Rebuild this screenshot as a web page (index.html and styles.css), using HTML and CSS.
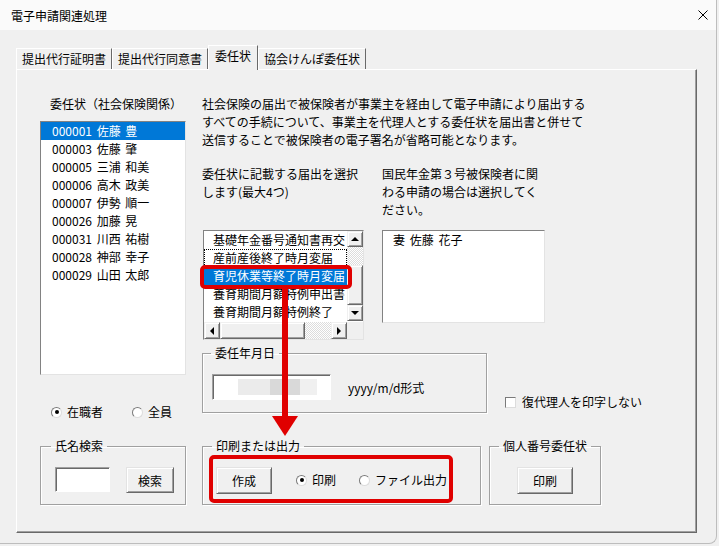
FILE: index.html
```html
<!DOCTYPE html>
<html lang="ja">
<head>
  <meta charset="UTF-8" />
  <title>電子申請関連処理</title>
  <link rel="stylesheet" href="styles.css">
</head>
<body>
  <div class="window">
    <div class="titlebar">
      <span>電子申請関連処理</span>
      <svg class="close" width="10" height="10" viewBox="0 0 10 10">
        <path d="M0.5 0.5 L9.5 9.5 M9.5 0.5 L0.5 9.5" stroke="#000" stroke-width="1" fill="none"/>
      </svg>
    </div>

    <div class="tabs">
      <div class="tab">提出代行証明書</div>
      <div class="tab">提出代行同意書</div>
      <div class="tab active">委任状</div>
      <div class="tab">協会けんぽ委任状</div>
    </div>

    <div class="panel">
      <div class="top">
        <div class="left-col">
          <div class="caption">委任状（社会保険関係）</div>
          <div class="listbox staff">
            <div class="item sel">000001 佐藤 豊</div>
            <div class="item">000003 佐藤 肇</div>
            <div class="item">000005 三浦 和美</div>
            <div class="item">000006 高木 政美</div>
            <div class="item">000007 伊勢 順一</div>
            <div class="item">000026 加藤 晃</div>
            <div class="item">000031 川西 祐樹</div>
            <div class="item">000028 神部 幸子</div>
            <div class="item">000029 山田 太郎</div>
          </div>
          <div class="radios">
            <label class="opt"><span class="radio on"></span>在職者</label>
            <label class="opt"><span class="radio"></span>全員</label>
          </div>
        </div>

        <div class="right-col">
          <p class="desc">社会保険の届出で被保険者が事業主を経由して電子申請により届出する<br>すべての手続について、事業主を代理人とする委任状を届出書と併せて<br>送信することで被保険者の電子署名が省略可能となります。</p>

          <div class="pick-row">
            <div class="pick">
              <p class="note">委任状に記載する届出を選択<br>します(最大4つ)</p>
              <div class="listbox forms">
                <div class="rows">
                  <div class="item">基礎年金番号通知書再交</div>
                  <div class="item focus">産前産後終了時月変届</div>
                  <div class="item sel">育児休業等終了時月変届</div>
                  <div class="item">養育期間月額特例申出書</div>
                  <div class="item">養育期間月額特例終了</div>
                </div>
                <div class="vscroll">
                  <span class="sbtn"><i class="tri up"></i></span>
                  <span class="track v1"></span>
                  <span class="thumb v2"></span>
                  <span class="sbtn"><i class="tri down"></i></span>
                </div>
                <div class="hscroll">
                  <span class="sbtn"><i class="tri left"></i></span>
                  <span class="thumb h1"></span>
                  <span class="track h2"></span>
                  <span class="sbtn"><i class="tri right"></i></span>
                </div>
                <div class="corner"></div>
                <div class="mark"></div>
              </div>
            </div>
            <div class="pick">
              <p class="note">国民年金第３号被保険者に関<br>わる申請の場合は選択してく<br>ださい。</p>
              <div class="listbox spouse">
                <div class="item">妻 佐藤 花子</div>
              </div>
            </div>
          </div>

          <div class="date-row">
            <fieldset class="group date-group">
              <legend>委任年月日</legend>
              <div class="textbox date-box"><span class="blurred"></span></div>
              <span class="hint">yyyy/m/d形式</span>
            </fieldset>
            <label class="opt check-opt"><span class="checkbox"></span>復代理人を印字しない</label>
          </div>
        </div>
      </div>

      <div class="bottom">
        <fieldset class="group search-group">
          <legend>氏名検索</legend>
          <div class="textbox name-box"></div>
          <button class="btn small">検索</button>
        </fieldset>

        <fieldset class="group output-group">
          <legend>印刷または出力</legend>
          <div class="highlight">
            <button class="btn">作成</button>
            <label class="opt first"><span class="radio on"></span>印刷</label>
            <label class="opt"><span class="radio"></span>ファイル出力</label>
          </div>
        </fieldset>

        <fieldset class="group mynumber-group">
          <legend>個人番号委任状</legend>
          <button class="btn">印刷</button>
        </fieldset>
      </div>

      <svg class="arrow" width="26" height="148" viewBox="0 0 26 148">
        <rect x="10" y="0" width="6" height="131" fill="#e00000"/>
        <polygon points="0,128 26,128 13,148" fill="#e00000"/>
      </svg>
    </div>
  </div>
</body>
</html>
```

FILE: styles.css
```css
* {
  box-sizing: border-box;
}
body {
  margin: 0;
  background: #f0f0f0;
  font-family: "Noto Sans CJK JP", "Noto Sans", sans-serif;
  font-size: 12px;
  color: #000;
}
.window {
  width: 717px;
  height: 544px;
  background: #f0f0f0;
  border-right: 1px solid #bdbdbd;
  border-bottom: 1px solid #bdbdbd;
  border-radius: 0 0 8px 0;
  overflow: hidden;
}
.titlebar {
  height: 30px;
  background: #fafafa;
  display: flex;
  align-items: center;
  justify-content: space-between;
  padding: 0 8px 0 11px;
}

/* tabs */
.tabs {
  display: flex;
  align-items: flex-end;
  height: 24px;
  margin: 15px 0 0 16px;
  position: relative;
  z-index: 1;
}
.tab {
  height: 21px;
  line-height: 20px;
  padding: 0 5px;
  border-top: 1px solid #fff;
  border-left: 1px solid #fff;
  border-right: 1px solid #696969;
  white-space: nowrap;
}
.tab.active {
  height: 25px;
  padding: 0 6px 4px;
  margin-bottom: -1px;
  background: #f0f0f0;
}
.panel {
  position: relative;
  margin-left: 16px;
  width: 681px;
  height: 464px;
  border: 1px solid;
  border-color: #fff #696969 #696969 #fff;
  box-shadow: inset -1px -1px #a0a0a0;
  padding: 25px 0 0 23px;
}

/* layout */
.top {
  display: flex;
}
.left-col {
  width: 148px;
}
.caption {
  margin-left: 10px;
  line-height: 18px;
}
.right-col {
  margin-left: 14px;
}
.desc {
  margin: 0;
  line-height: 18px;
  white-space: nowrap;
}
.pick-row {
  display: flex;
  margin-top: 16px;
}
.pick {
  width: 180px;
}
.note {
  margin: 0;
  height: 65px;
  line-height: 18px;
  white-space: nowrap;
}
.date-row {
  display: flex;
  align-items: flex-end;
  margin-top: 6px;
}
.bottom {
  display: flex;
  align-items: flex-start;
  margin-top: 18px;
}

/* list boxes */
.listbox {
  background: #fff;
  border: 1px solid;
  border-color: #828282 #e3e3e3 #e3e3e3 #828282;
  overflow: hidden;
}
.item {
  height: 18px;
  line-height: 18px;
  padding-left: 11px;
  white-space: nowrap;
  word-spacing: 2px;
  overflow: hidden;
}
.item.sel {
  background: #0078d7;
  color: #fff;
}
.item.focus {
  outline: 1px dotted #000;
  outline-offset: -1px;
}
.staff {
  margin: 8px 0 0 0;
  width: 146px;
  height: 254px;
}
.forms {
  position: relative;
  overflow: visible;
  margin-left: 1px;
  width: 161px;
  height: 110px;
  display: grid;
  grid-template-columns: 143px 16px;
  grid-template-rows: 91px 17px;
}
.forms .item {
  padding-left: 9px;
}
.rows {
  overflow: hidden;
}
.spouse {
  width: 163px;
  height: 93px;
}
.spouse .item {
  padding-left: 10px;
}

/* scrollbars */
.vscroll {
  display: flex;
  flex-direction: column;
}
.hscroll {
  display: flex;
}
.sbtn, .thumb {
  display: flex;
  align-items: center;
  justify-content: center;
  background: #f0f0f0;
  border: 1px solid;
  border-color: #f0f0f0 #696969 #696969 #f0f0f0;
  box-shadow: inset 1px 1px #fff, inset -1px -1px #a0a0a0;
}
.vscroll .sbtn {
  height: 16px;
}
.hscroll .sbtn {
  width: 16px;
}
.track {
  background: repeating-conic-gradient(#dcdcdc 0 25%, #fff 0 50%) 0 0 / 2px 2px;
}
.v1 { height: 18px; }
.v2 { height: 40px; }
.h1 { width: 85px; }
.h2 { width: 26px; }
.corner {
  background: #f0f0f0;
}
.tri {
  width: 0;
  height: 0;
  border: 4px solid transparent;
}
.tri.up { border-bottom-color: #000; border-top-width: 0; }
.tri.down { border-top-color: #000; border-bottom-width: 0; }
.tri.left { border-right-color: #000; border-left-width: 0; }
.tri.right { border-left-color: #000; border-right-width: 0; }

/* controls */
.opt {
  display: flex;
  align-items: center;
  line-height: 18px;
  white-space: nowrap;
}
.radios {
  display: flex;
  margin: 28px 0 0 11px;
}
.radios .opt + .opt {
  margin-left: 29px;
}
.radio {
  width: 11px;
  height: 11px;
  margin-right: 5px;
  border-radius: 50%;
  background: #fff;
  border: 1px solid;
  border-color: #7a7a7a #dcdcdc #dcdcdc #7a7a7a;
  display: flex;
  align-items: center;
  justify-content: center;
}
.radio.on::after {
  content: "";
  width: 4px;
  height: 4px;
  border-radius: 50%;
  background: #000;
}
.checkbox {
  width: 11px;
  height: 11px;
  margin-right: 6px;
  background: #fff;
  border: 1px solid;
  border-color: #7a7a7a #dcdcdc #dcdcdc #7a7a7a;
}
.check-opt {
  margin: 0 0 2px 18px;
}
.textbox {
  background: #fff;
  border: 1px solid;
  border-color: #a0a0a0 #fff #fff #a0a0a0;
  box-shadow: inset 1px 1px #696969;
}
.btn {
  font: inherit;
  color: #000;
  background: #f0f0f0;
  width: 56px;
  height: 27px;
  padding: 0;
  border: 1px solid;
  border-color: #e3e3e3 #696969 #696969 #e3e3e3;
  box-shadow: inset 1px 1px #fff, inset -1px -1px #a0a0a0;
}
.btn.small {
  width: 48px;
  height: 26px;
}

/* group boxes */
.group {
  margin: 0;
  min-width: 0;
  border: 1px solid #a0a0a0;
  box-shadow: inset 1px 1px #fff, 1px 1px #fff;
  display: flex;
  align-items: flex-start;
}
.group legend {
  padding: 0 4px;
  line-height: 14px;
  font-size: 12px;
  white-space: nowrap;
}
.date-group {
  width: 285px;
  padding: 14px 9px 12px;
  align-items: center;
}
.date-group legend {
  margin-left: -1px;
}
.date-box {
  width: 119px;
  height: 26px;
}
.blurred {
  display: block;
  margin: 4px 0 0 25px;
  width: 79px;
  height: 16px;
  background: linear-gradient(to right, #ebebeb 0 32px, #d9d9d9 32px 62px, #f0f0f0 62px);
}
.hint {
  margin-left: 17px;
}
.search-group {
  width: 146px;
  height: 66px;
  padding: 14px 0 11px 14px;
}
.search-group legend {
  margin-left: -4px;
}
.name-box {
  width: 55px;
  height: 25px;
  margin-right: 16px;
}
.output-group {
  width: 279px;
  height: 66px;
  margin-left: 16px;
  padding: 2px 0 1px 6px;
}
.output-group legend {
  margin-left: 3px;
}
.highlight {
  display: flex;
  align-items: flex-start;
  width: 244px;
  height: 48px;
  padding: 8px 0 0 3px;
  border: 4px solid #e00000;
  border-radius: 5px;
}
.highlight .opt {
  margin-top: 4px;
  margin-left: 23px;
}
.highlight .opt.first {
  margin-left: 24px;
}
.mynumber-group {
  width: 112px;
  height: 66px;
  margin-left: 8px;
  padding: 14px 0 0;
  justify-content: center;
}
.mynumber-group legend {
  margin-left: 9px;
}

/* annotations over the dialog */
.mark {
  position: absolute;
  left: -4px;
  top: 34px;
  width: 152px;
  height: 24px;
  border: 4px solid #e00000;
  border-radius: 5px;
}
.arrow {
  position: absolute;
  left: 255px;
  top: 218px;
  z-index: 2;
}
```
